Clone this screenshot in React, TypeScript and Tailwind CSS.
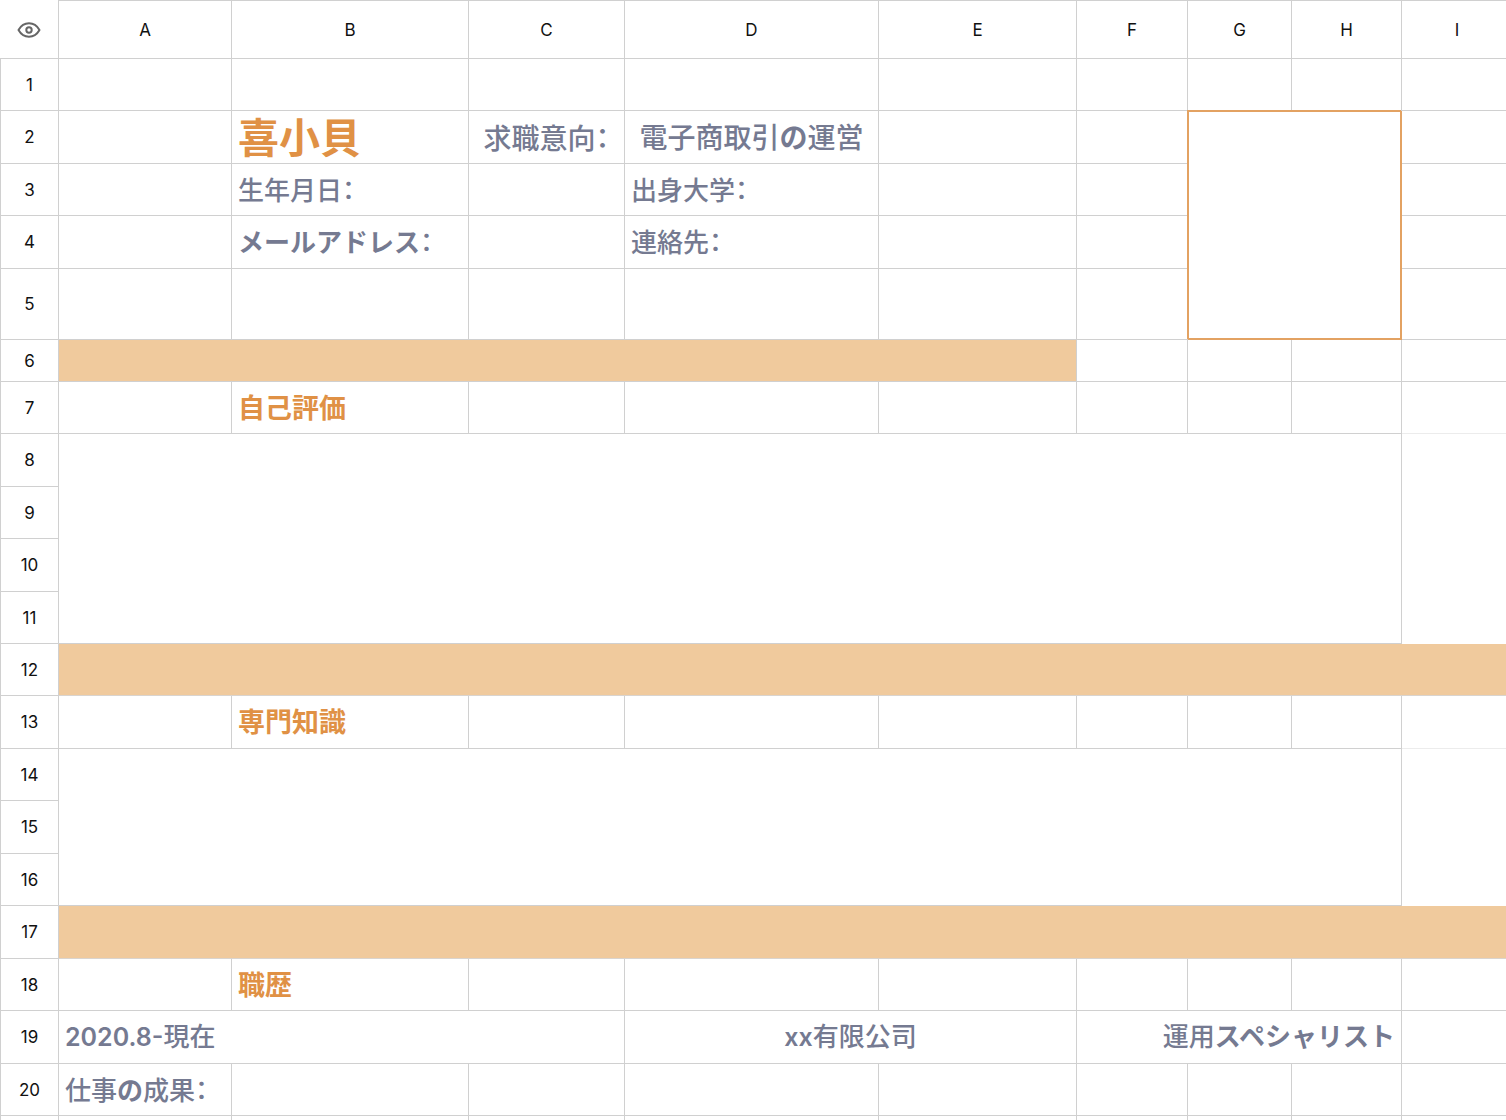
import React from "react";

type Cell = {
  text?: string;
  colSpan?: number;
  rowSpan?: number;
  className?: string;
};

type Row = { h: number; cells: Cell[] };

const COLUMNS = ["A", "B", "C", "D", "E", "F", "G", "H", "I"];
const LAST_ROW = 20;

const LINE = "border-r border-b border-[#d0d0d0]";
const BLANK = "";
const FILL = "border-b border-[#d9d4cf] bg-[#f0ca9d]";
const FAINT = "border-b border-[#ececec]";
const PHOTO =
  "relative z-10 border border-r-2 border-b-2 border-[#e3a262] bg-white shadow-[-1px_-1px_0_#e3a262]";

const NAME = "pt-0.5 text-[41px] font-bold text-[#e09145]";
const TITLE = "pt-0.5 text-[27px] font-bold text-[#e09145]";
const INTENT = "pt-0.5 text-[28px] font-medium text-[#757a91]";
const LABEL = "pt-0 text-[26px] font-medium text-[#757a91]";

const empty = (n: number): Cell[] => Array.from({ length: n }, () => ({}));

const ROWS: Row[] = [
  { h: 52, cells: empty(9) },
  {
    h: 53,
    cells: [
      {},
      { text: "喜小貝", className: NAME },
      { text: "求職意向：", className: `${INTENT} text-center` },
      { text: "電子商取引の運営", className: `${INTENT} text-center` },
      {},
      {},
      { colSpan: 2, rowSpan: 4, className: PHOTO },
      {},
    ],
  },
  {
    h: 52,
    cells: [
      {},
      { text: "生年月日：", className: LABEL },
      {},
      { text: "出身大学：", className: LABEL },
      ...empty(3),
    ],
  },
  {
    h: 53,
    cells: [
      {},
      { text: "メールアドレス：", className: LABEL },
      {},
      { text: "連絡先：", className: LABEL },
      ...empty(3),
    ],
  },
  { h: 71, cells: empty(7) },
  {
    h: 42,
    cells: [
      { colSpan: 5, className: `${LINE} bg-[#f0ca9d]` },
      ...empty(4),
    ],
  },
  {
    h: 52,
    cells: [
      {},
      { text: "自己評価", className: TITLE },
      ...empty(6),
      { className: FAINT },
    ],
  },
  {
    h: 53,
    cells: [
      { colSpan: 8, rowSpan: 4, className: LINE },
      { rowSpan: 4, className: BLANK },
    ],
  },
  { h: 52, cells: [] },
  { h: 53, cells: [] },
  { h: 52, cells: [] },
  { h: 52, cells: [{ colSpan: 9, className: FILL }] },
  {
    h: 53,
    cells: [
      {},
      { text: "専門知識", className: TITLE },
      ...empty(6),
      { className: FAINT },
    ],
  },
  {
    h: 52,
    cells: [
      { colSpan: 8, rowSpan: 3, className: LINE },
      { rowSpan: 3, className: BLANK },
    ],
  },
  { h: 53, cells: [] },
  { h: 52, cells: [] },
  { h: 53, cells: [{ colSpan: 9, className: FILL }] },
  { h: 52, cells: [{}, { text: "職歴", className: TITLE }, ...empty(7)] },
  {
    h: 53,
    cells: [
      { text: "2020.8-現在", colSpan: 3, className: LABEL },
      { text: "xx有限公司", colSpan: 2, className: `${LABEL} text-center` },
      { text: "運用スペシャリスト", colSpan: 3, className: `${LABEL} text-right` },
      {},
    ],
  },
  { h: 52, cells: [{ text: "仕事の成果：", className: LABEL }, ...empty(8)] },
  { h: 53, cells: empty(9) },
];

// Kana and latin runs are set heavier than kanji, the colon takes half a cell
function Runs({ text }: { text: string }) {
  const parts = text.match(/[\u3040-\u30ff]+|：|[\x20-\x7e]+|[^\u3040-\u30ff：\x20-\x7e]+/g) || [];
  return (
    <>
      {parts.map((p, i) => {
        if (/^[\u3040-\u30ff]/.test(p)) {
          return <span key={i} className="font-bold">{p}</span>;
        }
        if (/^[\x20-\x7e]/.test(p)) {
          return <span key={i} className="text-[25px] font-semibold">{p}</span>;
        }
        if (p === "：") {
          return (
            <span key={i} className="font-['Noto_Sans_CJK_SC',sans-serif] [font-feature-settings:'halt']">
              {p}
            </span>
          );
        }
        return <span key={i}>{p}</span>;
      })}
    </>
  );
}

function EyeIcon() {
  return (
    <svg width="24" height="16" viewBox="0 0 24 16" fill="none" stroke="#666666" strokeWidth="2">
      <path d="M1.500 8C4 3.600 7.600 1.300 12 1.300S20 3.600 22.500 8C20 12.400 16.400 14.700 12 14.700S4 12.400 1.500 8Z" strokeLinejoin="round" />
      <circle cx="12" cy="8" r="2.700" />
    </svg>
  );
}

export default function App() {
  return (
    <div className="h-screen overflow-auto bg-white [scrollbar-width:none]">
      <table
        lang="ja"
        className="w-[1513px] min-w-full table-fixed border-separate border-spacing-0 font-['Inter','Noto_Sans_CJK_JP',sans-serif] text-[17px] text-[#111111]"
      >
        <colgroup>
          <col className="w-[59px]" />
          <col className="w-[173px]" />
          <col className="w-[237px]" />
          <col className="w-[156px]" />
          <col className="w-[254px]" />
          <col className="w-[198px]" />
          <col className="w-[111px]" />
          <col className="w-[104px]" />
          <col className="w-[110px]" />
          <col />
        </colgroup>
        <thead>
          <tr className="h-[59px]">
            <th className={`${LINE} px-0 pt-0.5 pb-0`}>
              <button type="button" aria-label="表示" className="flex w-full items-center justify-center">
                <EyeIcon />
              </button>
            </th>
            {COLUMNS.map((c) => (
              <th key={c} scope="col" className={`${LINE} border-t px-0 pt-0.5 pb-0 font-normal`}>
                {c}
              </th>
            ))}
          </tr>
        </thead>
        <tbody>
          {ROWS.map((row, i) => (
            <tr key={i} style={{ height: row.h }}>
              <th scope="row" className={`${LINE} border-l px-0 pt-0.5 pb-0 font-normal`}>
                {i < LAST_ROW && i + 1}
              </th>
              {row.cells.map((cell, j) => (
                <td
                  key={j}
                  colSpan={cell.colSpan}
                  rowSpan={cell.rowSpan}
                  className={
                    cell.text
                      ? `${LINE} px-1.5 pb-0 leading-10 whitespace-nowrap ${cell.className}`
                      : `p-0 ${cell.className ?? LINE}`
                  }
                >
                  {cell.text && <Runs text={cell.text} />}
                </td>
              ))}
            </tr>
          ))}
        </tbody>
      </table>
    </div>
  );
}
